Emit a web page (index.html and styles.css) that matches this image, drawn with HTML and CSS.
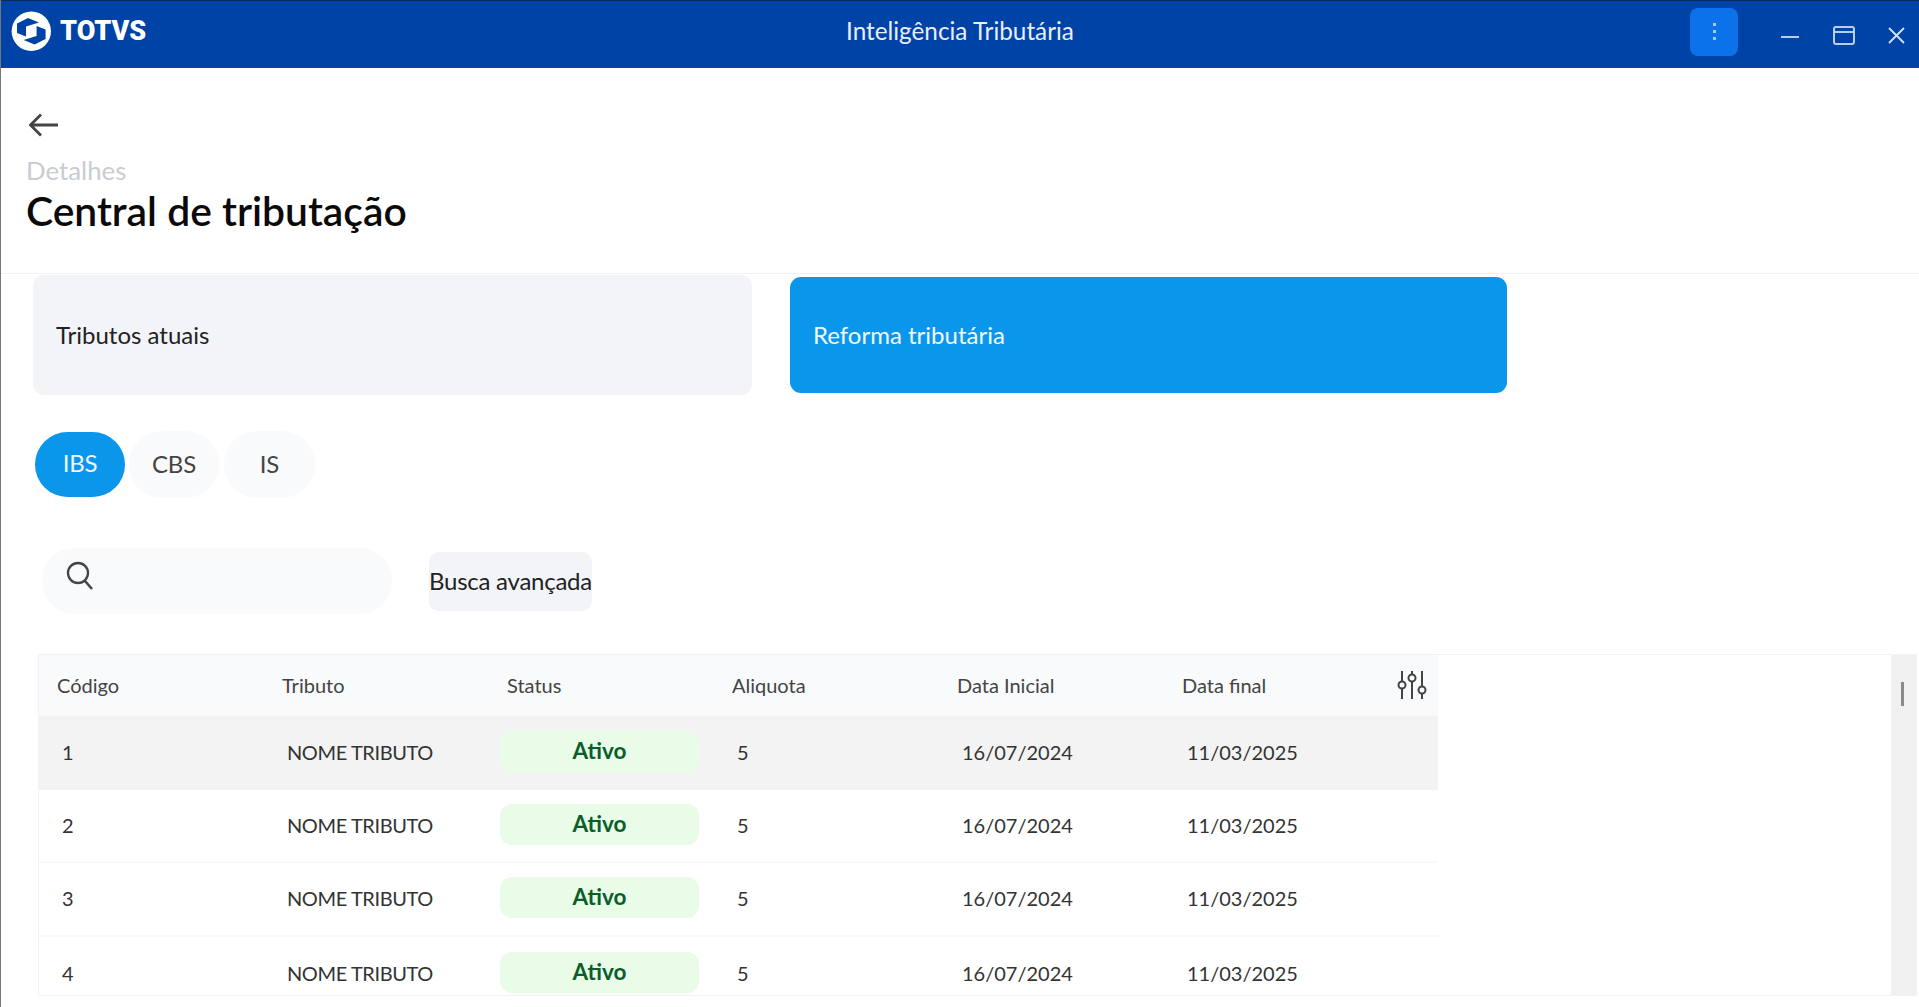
FILE: index.html
```html
<!DOCTYPE html>
<html lang="pt-BR">
<head>
<meta charset="utf-8">
<title>Inteligência Tributária</title>
<link rel="stylesheet" href="styles.css">
</head>
<body>
<div class="app">
  <header class="titlebar">
    <div class="brand">
      <svg class="logo" width="50" height="50" viewBox="0 0 50 50">
        <circle cx="25.300" cy="25.300" r="19.700" fill="#fff"/>
        <path d="M11 17.500L22 12L33 16.500L20 20.500V30.500L11 27Z" fill="#0043a6"/>
        <path d="M39.600 33.100L28.600 38.600L17.600 34.100L30.600 30.100V20.100L39.600 23.600Z" fill="#0043a6"/>
      </svg>
      <span class="brand-name">TOTVS</span>
    </div>
    <div class="app-title">Inteligência Tributária</div>
    <div class="win-actions">
      <button class="menu-btn" aria-label="Menu"><i></i><i></i><i></i></button>
      <svg class="win-icon min" width="20" height="4" viewBox="0 0 20 4"><path d="M1 2H19" stroke="#b9cdea" stroke-width="2"/></svg>
      <svg class="win-icon max" width="22" height="19" viewBox="0 0 22 19"><rect x="1" y="1" width="20" height="17" rx="2" fill="none" stroke="#b9cdea" stroke-width="2"/><path d="M1 6H21" stroke="#b9cdea" stroke-width="2"/></svg>
      <svg class="win-icon close" width="17" height="17" viewBox="0 0 17 17"><path d="M1 1L16 16M16 1L1 16" stroke="#d5e0f2" stroke-width="1.800"/></svg>
    </div>
  </header>

  <section class="page-head">
    <svg class="back" width="30" height="24" viewBox="0 0 30 24"><path d="M29 12H2M12 1.500L1.500 12L12 22.500" fill="none" stroke="#444" stroke-width="2.800"/></svg>
    <div class="crumb">Detalhes</div>
    <h1 class="page-title">Central de tributação</h1>
  </section>

  <section class="content">
    <div class="cards">
      <div class="card">Tributos atuais</div>
      <div class="card active">Reforma tributária</div>
    </div>

    <div class="pills">
      <div class="pill active">IBS</div>
      <div class="pill">CBS</div>
      <div class="pill">IS</div>
    </div>

    <div class="search-row">
      <div class="search">
        <svg width="28" height="30" viewBox="0 0 28 30"><circle cx="12" cy="12" r="10" fill="none" stroke="#444" stroke-width="2.300"/><path d="M19 20L26 28" stroke="#444" stroke-width="2.600"/></svg>
      </div>
      <button class="adv-btn">Busca avançada</button>
    </div>

    <div class="table-wrap">
      <div class="table">
        <div class="row head">
          <div class="cell">Código</div>
          <div class="cell">Tributo</div>
          <div class="cell">Status</div>
          <div class="cell">Aliquota</div>
          <div class="cell">Data Inicial</div>
          <div class="cell">Data final</div>
          <svg class="sliders" width="30" height="28" viewBox="0 0 30 28">
            <g fill="none" stroke="#444" stroke-width="2">
              <path d="M5 0V10M5 18V28M15 0V3M15 11V28M25 0V15M25 23V28"/>
              <circle cx="5" cy="14" r="3.500"/><circle cx="15" cy="7" r="3.500"/><circle cx="25" cy="19" r="3.500"/>
            </g>
          </svg>
        </div>
        <div class="row body hover">
          <div class="cell">1</div><div class="cell name">NOME TRIBUTO</div><div class="status-cell"><span class="status">Ativo</span></div><div class="cell">5</div><div class="cell">16/07/2024</div><div class="cell">11/03/2025</div>
        </div>
        <div class="row body">
          <div class="cell">2</div><div class="cell name">NOME TRIBUTO</div><div class="status-cell"><span class="status">Ativo</span></div><div class="cell">5</div><div class="cell">16/07/2024</div><div class="cell">11/03/2025</div>
        </div>
        <div class="row body">
          <div class="cell">3</div><div class="cell name">NOME TRIBUTO</div><div class="status-cell"><span class="status">Ativo</span></div><div class="cell">5</div><div class="cell">16/07/2024</div><div class="cell">11/03/2025</div>
        </div>
        <div class="row body last">
          <div class="cell">4</div><div class="cell name">NOME TRIBUTO</div><div class="status-cell"><span class="status">Ativo</span></div><div class="cell">5</div><div class="cell">16/07/2024</div><div class="cell">11/03/2025</div>
        </div>
      </div>
      <div class="scroll-track"><div class="scroll-thumb"></div></div>
    </div>
  </section>
</div>
</body>
</html>
```
FILE: styles.css
```css
* { box-sizing: border-box; }
html, body { margin: 0; padding: 0; height: 100%; overflow: hidden; background: #fff; }
body { font-family: "Lato", "Liberation Sans", sans-serif; color: #333; }
.app { height: 1007px; display: flex; flex-direction: column; border-left: 1px solid #777; overflow: hidden; }

.titlebar { height: 68px; flex: none; background: #0043a6; border-top: 1px solid #0b2a5e; display: grid; grid-template-columns: 1fr auto 1fr; align-items: center; color: #fff; }
.brand { display: flex; align-items: center; padding-left: 5px; margin-top: -7px; gap: 4px; }
.logo { flex: none; }
.brand-name { font-family: "Roboto", sans-serif; font-weight: 900; font-size: 27px; line-height: 1; letter-spacing: 0; }
.app-title { font-size: 24.300px; color: #e8eefa; margin-top: -8px; }
.win-actions { display: flex; align-items: center; justify-content: flex-end; margin-top: -6px; }
.menu-btn { width: 48px; height: 48px; background: #0b72ea; border: 0; border-radius: 8px; padding: 0; display: flex; flex-direction: column; align-items: center; justify-content: center; gap: 4px; margin-right: 42px; }
.menu-btn i { width: 3px; height: 3px; background: #a6c8f5; display: block; }
.win-icon { flex: none; }
.min { margin-right: 33px; margin-top: 10px; }
.max { margin-right: 33px; margin-top: 8px; }
.close { margin-right: 14px; margin-top: 8px; }

.page-head { height: 206px; flex: none; padding: 45px 0 0 25px; border-bottom: 1px solid #f2f2f2; }
.back { display: block; margin-left: 3px; }
.crumb { font-size: 25.800px; line-height: 32px; color: #c9ccd2; margin-top: 17px; }
.page-title { font-size: 40.800px; line-height: 46px; font-weight: 600; color: #0a0a0a; margin: 2px 0 0; }

.content { flex: 1; min-height: 0; display: flex; flex-direction: column; padding-left: 31px; }
.cards { display: flex; align-items: center; gap: 38px; height: 120px; margin-top: 1px; }
.card { width: 719px; height: 120px; margin-left: 1px; border-radius: 11px; background: #f3f4f8; display: flex; align-items: center; padding: 0 0 2px 23px; font-size: 24px; color: #222; }
.card.active { width: 717px; height: 116px; margin-left: 0; background: #0a97eb; color: #f2f9ff; }

.pills { display: flex; gap: 4px; margin: 36px 0 0 3px; align-items: center; }
.pill { width: 90px; height: 67px; border-radius: 33px; background: #f9fafb; display: flex; align-items: center; justify-content: center; font-size: 24px; color: #444; padding-bottom: 2px; letter-spacing: -0.2px; }
.pill + .pill + .pill { width: 91px; margin-left: 1px; }
.pill.active { height: 65px; background: #0a97eb; color: #f2f9ff; padding-bottom: 4px; }

.search-row { display: flex; align-items: center; margin: 50px 0 0 10px; gap: 37px; }
.search { width: 350px; height: 66px; border-radius: 32px; background: #f9fafb; display: flex; align-items: flex-start; padding: 13px 0 0 24px; }
.adv-btn { width: 163px; height: 59px; border: 0; padding: 0 0 2px; border-radius: 10px; background: #f3f4f8; font-family: inherit; font-size: 24px; color: #222; white-space: nowrap; letter-spacing: -0.25px; }

.table-wrap { display: flex; justify-content: space-between; margin: 40px 2px 0 6px; height: 342px; border: 1px solid #f3f3f3; overflow: hidden; flex: none; }
.table { width: 1399px; flex: none; }
.row { display: grid; grid-template-columns: repeat(6, 225px) 49px; align-items: center; font-size: 20px; }
.head { height: 61px; background: #f9fafb; color: #444; padding-bottom: 1px; }
.head .cell { padding-left: 18px; }
.sliders { justify-self: start; margin-left: 8px; }
.body { height: 73.500px; border-bottom: 2px solid #f8f8f8; color: #333; padding-bottom: 1px; }
.body .cell { padding-left: 23px; }
.name { letter-spacing: -0.4px; }
.hover { background: #f3f3f3; border-bottom: 0; padding-bottom: 2px; }
.last { border-bottom: 0; }
.status-cell { padding-left: 11px; }
.status { display: flex; align-items: center; justify-content: center; width: 199px; height: 41px; border-radius: 12px; background: #e8fce8; color: #0b5d2a; font-weight: 700; font-size: 22.500px; margin-top: -1px; padding-bottom: 2px; }
.scroll-track { width: 25px; flex: none; background: #f0f0f0; padding: 27px 0 0 10px; }
.scroll-thumb { width: 3px; height: 24px; background: #8a8a8a; }
```
